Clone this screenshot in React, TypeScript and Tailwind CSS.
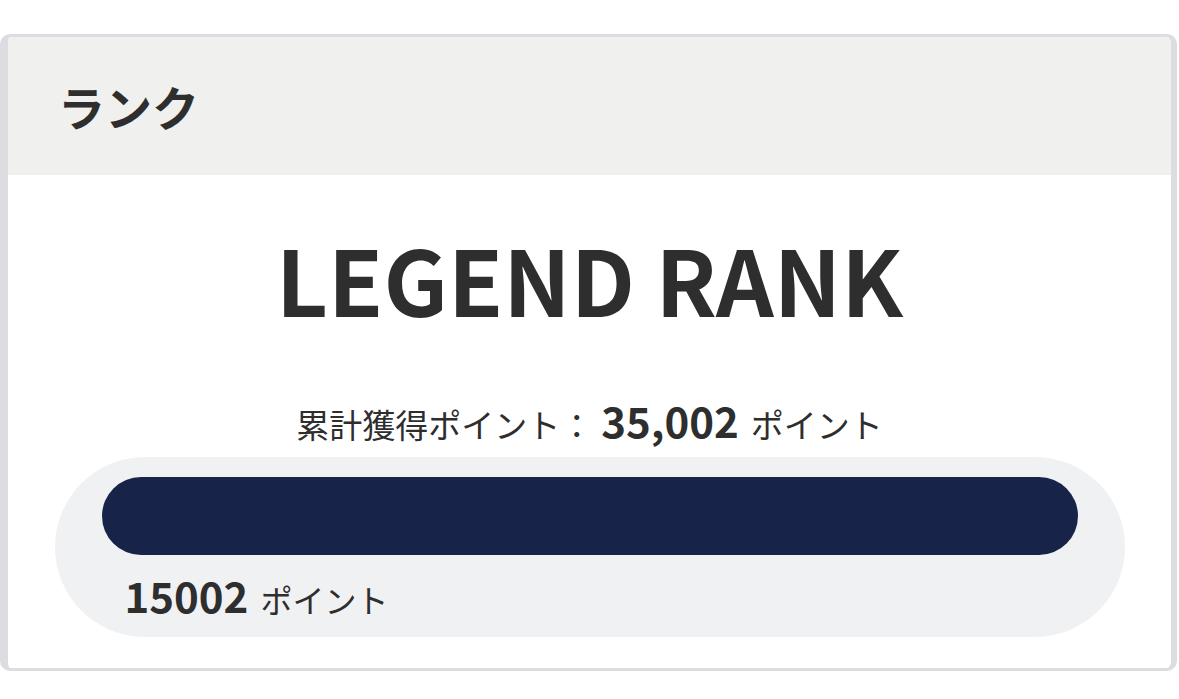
export default function App() {
  const total = 35002;
  const current = 15002;
  return (
    <div className="min-h-[699px] w-[1179px] bg-white pt-[34px] font-['Noto_Sans_CJK_JP',sans-serif] text-[#2e2e2e]">
      <div className="w-[1177px] overflow-hidden rounded-[10px] border-t-[3px] border-r-[6px] border-b-[3px] border-l-[8px] border-[#dcdde1] bg-white">
        <div className="flex h-[138px] items-center bg-[#f0f0ef] pl-[50px]">
          <h2 className="mt-[-2px] text-[47px] font-bold leading-none">ランク</h2>
        </div>
        <div className="flex flex-col items-center pt-[58px] pb-[31px]">
          <p className="text-[90px] leading-none font-bold">LEGEND RANK</p>
          <p className="mt-[76px] flex items-baseline text-[33px] leading-none">
            <span>累計獲得ポイント：</span>
            <span className="ml-[8px] text-[42px] font-bold">{total.toLocaleString('en-US')}</span>
            <span className="ml-[12px] text-[33px]">ポイント</span>
          </p>
          <div className="mt-[16px] w-[1070px] rounded-full bg-[#f0f1f3] px-[47px] pt-[20px] pb-[21px]">
            <div className="h-[78px] w-full rounded-full bg-[#172348]" />
            <p className="mt-[19px] ml-[23px] flex items-baseline leading-none">
              <span className="text-[42px] font-bold">{current}</span>
              <span className="ml-[12px] text-[32px]">ポイント</span>
            </p>
          </div>
        </div>
      </div>
    </div>
  );
}
